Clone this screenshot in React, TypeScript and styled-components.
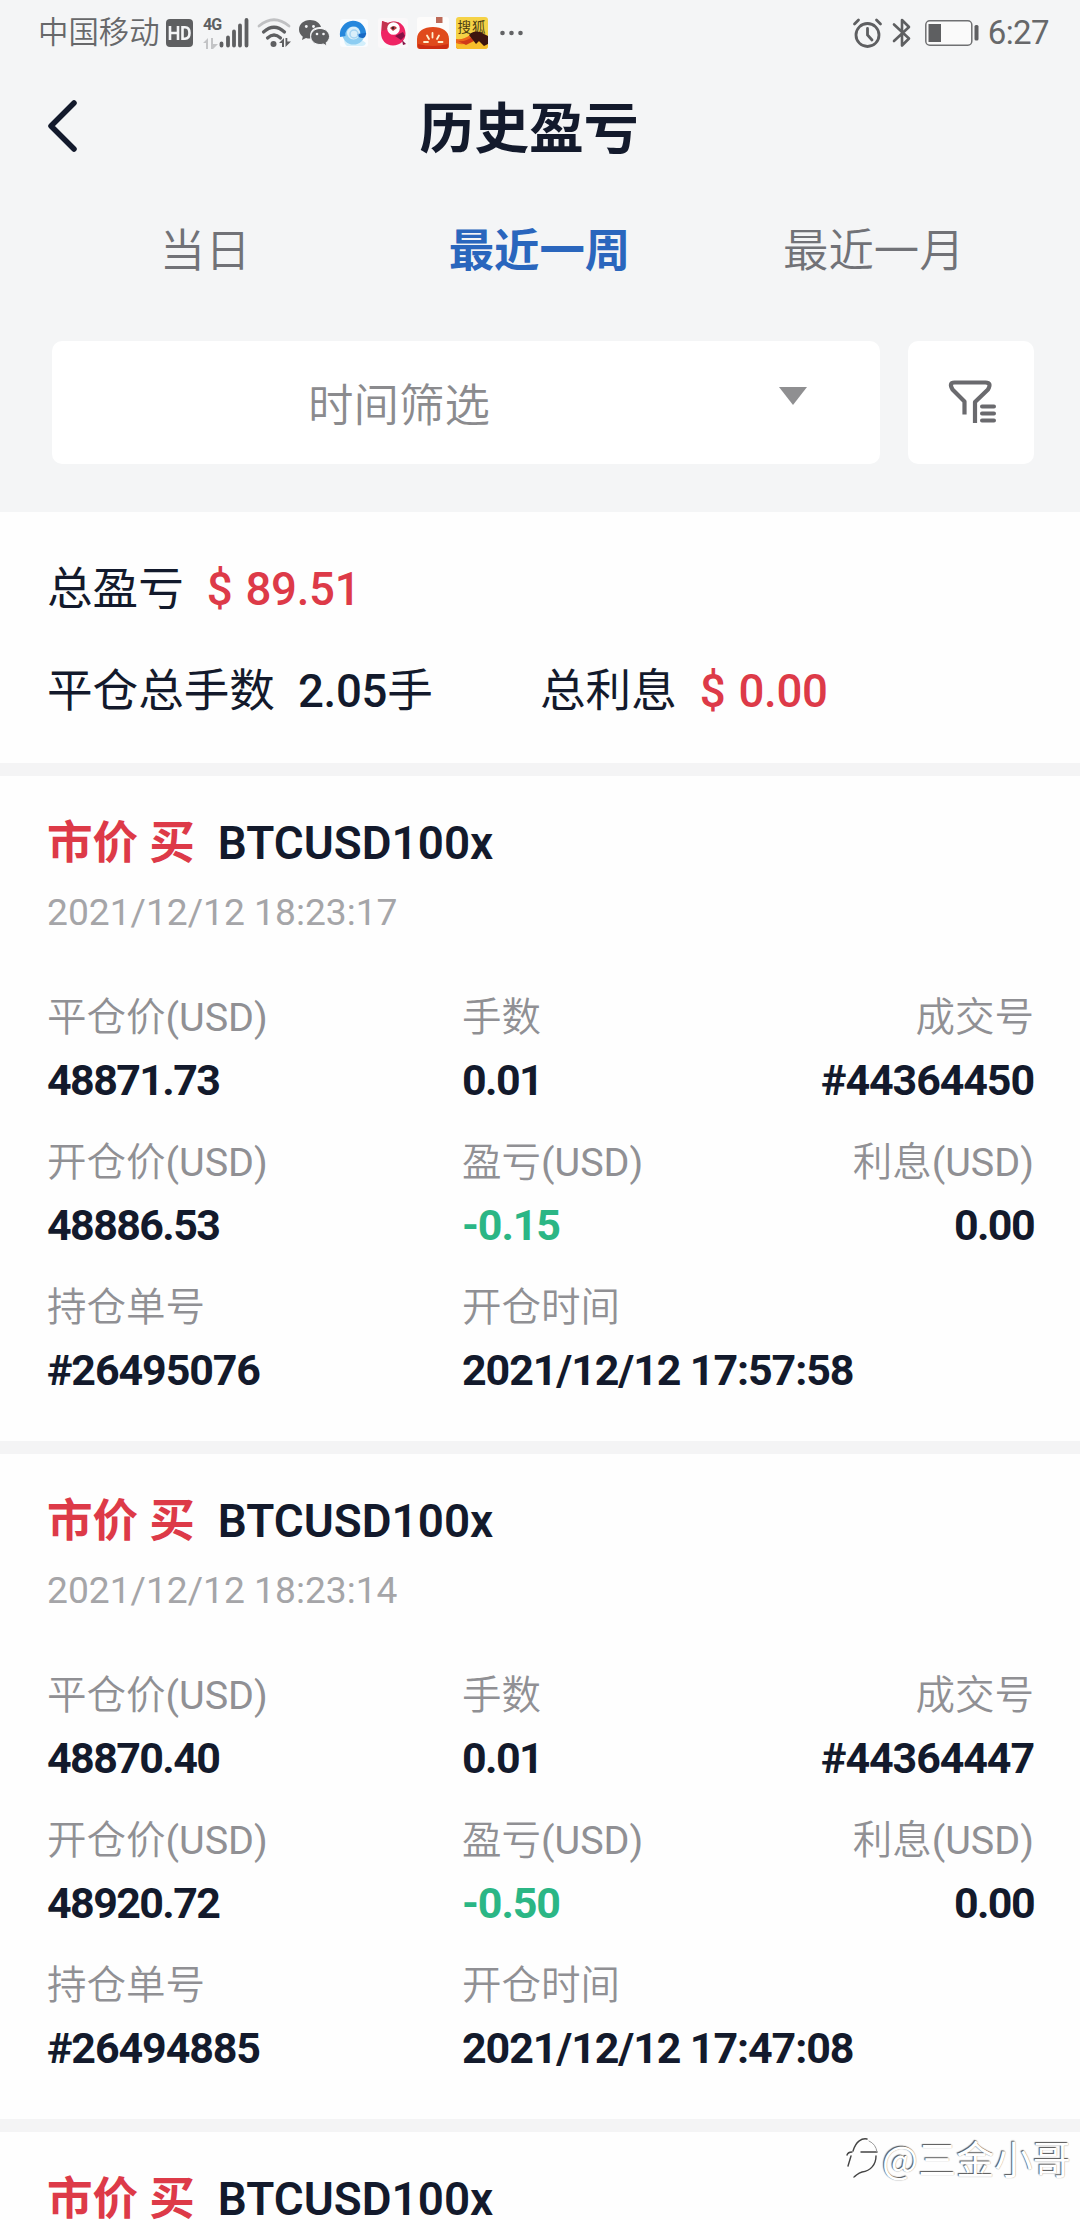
import React from "react";
import styled, { createGlobalStyle } from "styled-components";

const INK = "#131a2c";
const RED = "#dd3a48";
const GREEN = "#2bb685";

const GlobalStyle = createGlobalStyle`
  * { box-sizing: border-box; }
  html, body { margin: 0; padding: 0; background: #fff; }
  body {
    font-family: Roboto, "Noto Sans CJK SC", sans-serif;
    color: ${INK};
  }
`;

const Screen = styled.div`
  position: relative;
  width: 1080px;
  height: 2220px;
  overflow: hidden;
  background: #fefefe;
`;

const Header = styled.header`
  height: 512px;
  background: #f4f5f6;
  display: flex;
  flex-direction: column;
`;

const StatusBar = styled.div`
  height: 66px;
  padding: 0 31px 0 38px;
  display: flex;
  justify-content: space-between;
  color: #67686a;
`;

const Carrier = styled.span`
  font-size: 30.4px;
  line-height: 64px;
  width: 128px;
  font-weight: 350;
  white-space: nowrap;
`;

const StatusGroup = styled.div`
  display: flex;
  align-items: center;
`;

const Clock = styled.span`
  font-size: 33px;
  line-height: 66px;
  letter-spacing: -0.6px;
  margin-left: 9px;
`;

const TitleBar = styled.div`
  height: 122px;
  padding: 0 48px;
  display: grid;
  grid-template-columns: 100px 1fr 122px;
  align-items: center;
`;

const Title = styled.h1`
  margin: 4px 0 0;
  text-align: center;
  font-size: 54.8px;
  line-height: 118px;
  font-weight: 700;
`;

const Tabs = styled.nav`
  height: 128px;
  padding: 0 39px 0 38px;
  display: grid;
  grid-template-columns: repeat(3, 1fr);
`;

const Tab = styled.button<{ $active?: boolean }>`
  border: 0;
  padding: 0;
  background: none;
  font-family: inherit;
  font-size: 45.4px;
  line-height: 124px;
  font-weight: ${(p) => (p.$active ? 700 : 350)};
  color: ${(p) => (p.$active ? "#2a66bd" : "#717277")};
`;

const FilterRow = styled.div`
  display: flex;
  gap: 28px;
  padding: 25px 46px 0 52px;
`;

const Select = styled.div`
  width: 828px;
  height: 123px;
  border-radius: 10px;
  background: #fff;
  display: flex;
  align-items: center;
  padding: 0 73px 2px 256px;
  justify-content: space-between;
  font-size: 45.5px;
  font-weight: 350;
  color: #8b8b8e;
`;

const Caret = styled.i`
  border: 14px solid transparent;
  border-top: 18px solid #8f8f91;
  border-bottom: 0;
  margin-top: -12px;
`;

const FilterButton = styled.div`
  flex: 1;
  height: 123px;
  border-radius: 10px;
  background: #fff;
  display: flex;
  align-items: center;
  justify-content: center;
`;

const Summary = styled.section`
  height: 251px;
  padding: 22px 47px 0;
`;

const SummaryRow = styled.div`
  height: 102px;
  display: flex;
  align-items: center;
  font-size: 45.6px;
`;

const Stat = styled.div<{ $width?: number }>`
  width: ${(p) => (p.$width ? `${p.$width}px` : "auto")};
  display: flex;
  align-items: baseline;
  gap: 23px;
  white-space: nowrap;
`;

const StatValue = styled.span<{ $red?: boolean }>`
  font-weight: 500;
  letter-spacing: -0.3px;
  word-spacing: 2px;
  color: ${(p) => (p.$red ? RED : INK)};
`;

const Hand = styled.span`
  font-weight: 400;
`;

const Card = styled.article`
  height: 678px;
  border-top: 13px solid #f4f4f5;
  padding: 32px 46px 0 47px;
`;

const CardTitle = styled.div`
  height: 72px;
  display: flex;
  gap: 23px;
  align-items: baseline;
  font-size: 45.5px;
  line-height: 72px;
  white-space: nowrap;
`;

const Side = styled.span`
  font-weight: 700;
  color: ${RED};
`;

const Symbol = styled.span`
  font-size: 45.8px;
  font-weight: 600;
`;

const Stamp = styled.div`
  height: 66px;
  font-size: 37.2px;
  line-height: 64px;
  color: #a5a5a8;
`;

const Fields = styled.div`
  margin-top: 41px;
  display: grid;
  grid-template-columns: 415px 1fr auto;
  grid-auto-rows: 145px;
`;

const Field = styled.div<{ $end?: boolean }>`
  text-align: ${(p) => (p.$end ? "right" : "left")};
  white-space: nowrap;
  &:nth-child(8) { grid-column: span 2; }
`;

const Label = styled.div`
  height: 62px;
  font-size: 39.5px;
  line-height: 62px;
  font-weight: 350;
  color: #909094;
`;

const Unit = styled.span`
  font-weight: 400;
`;

const Value = styled.div<{ $green?: boolean; $tight?: boolean }>`
  height: 62px;
  font-size: 43px;
  line-height: 62px;
  font-weight: 700;
  letter-spacing: ${(p) => (p.$tight ? "-1.6px" : "-1.1px")};
  color: ${(p) => (p.$green ? GREEN : INK)};
`;

const Watermark = styled.div`
  position: absolute;
  left: 847px;
  top: 2134px;
  display: flex;
  align-items: center;
  gap: 1px;
  font-family: "Noto Sans CJK SC", sans-serif;
  font-size: 38.2px;
  line-height: 48px;
  color: #fff;
  white-space: nowrap;
  text-shadow: -1px -1px 1px #555, 0 0 1px #888;
`;

const Svg = styled.svg<{ $left?: number }>`
  display: block;
  flex: none;
  margin-left: ${(p) => p.$left ?? 0}px;
  overflow: visible;
`;

const Hd = () => (
  <Svg width="27" height="28" viewBox="0 0 27 28">
    <rect width="27" height="28" rx="4" fill="#5e5f61" />
    <path d="M4 7v14M12 7v14M4 14h8M16.500 8.300h2.500q4.500 0 4.500 5.700t-4.500 5.700h-2.500z" fill="none" stroke="#f4f5f7" strokeWidth="2.600" />
  </Svg>
);

const Network = styled.div`
  width: 46px;
  height: 30px;
  margin-left: 10px;
  display: grid;
  grid-template-columns: 16px 30px;
`;

const NetType = styled.div`
  font: 700 16px/14px Roboto, sans-serif;
  letter-spacing: -1px;
  color: #5e5f61;
  display: flex;
  flex-direction: column;
  gap: 6px;
`;

const Signal = () => (
  <Network>
    <NetType>
      4G
      <Svg width="15" height="11" viewBox="0 0 15 11">
        <path d="M0 5L5 0v11H3V5zM8 0h2v6h5l-5 5H8z" fill="#c3c4c6" />
      </Svg>
    </NetType>
    <Svg width="30" height="30" viewBox="0 0 30 30">
      <path d="M2.500 25.500v2M9 19.500v8M15 13.500v14M21 7.500v20M27.500 2v25.500" stroke="#5e5f61" strokeWidth="3.800" strokeLinecap="round" />
    </Svg>
  </Network>
);

const Wifi = () => (
  <Svg $left={8} width="36" height="30" viewBox="0 0 36 30">
    <g fill="none" strokeLinecap="round">
      <path d="M2 8Q17 -4.500 32 8" stroke="#c0c1c3" strokeWidth="2.800" />
      <path d="M6.500 14Q17 4.500 27.500 14" stroke="#5e5f61" strokeWidth="3.200" />
      <path d="M10.500 20Q17 14 23.500 20" stroke="#5e5f61" strokeWidth="3.200" />
    </g>
    <circle cx="16.500" cy="26" r="3" fill="#5e5f61" />
    <path d="M22 25l5-5v9h-2v-4zM28.500 20h1.800v3.500H34l-5.500 5.500z" fill="#5e5f61" />
  </Svg>
);

const WeChat = () => (
  <Svg $left={6} width="31" height="28" viewBox="0 0 31 28">
    <path d="M11 1C4.500 1 0 5.300 0 10.500c0 3 1.500 5.500 3.800 7.200L3 21l4-2c1.300.4 3 .6 4.500.5C9.500 12 15 7.500 22 8 21 3.800 16.500 1 11 1z" fill="#5e5f61" />
    <path d="M21 9.500c-5.300 0-9.300 3.600-9.300 8s4 8 9.300 8c1.200 0 2.300-.2 3.300-.5l3.700 2-.9-3.300c2-1.500 3.400-3.700 3.400-6.200 0-4.400-4.200-8-9.500-8z" fill="#5e5f61" stroke="#f4f5f7" strokeWidth="1" />
    <g fill="#f4f5f7"><circle cx="7.300" cy="7.500" r="1.400" /><circle cx="14.500" cy="7.500" r="1.400" /><circle cx="18" cy="15" r="1.300" /><circle cx="24.500" cy="15" r="1.300" /></g>
  </Svg>
);

const Browser = () => (
  <Svg $left={10} width="28" height="28" viewBox="0 0 28 28">
    <rect width="28" height="28" rx="3" fill="#fafcfe" />
    <path d="M4 20q9 4 18 1l4 3q-1 3-4 3H7q-3-2-3-7z" fill="#d3effb" />
    <circle cx="13.500" cy="14" r="9" fill="#d9effa" stroke="#8ccdf2" strokeWidth="5" />
    <path d="M2.800 17.500A11 11 0 0 1 13 4.500c6 0 10 4 10.500 11" fill="none" stroke="#2587dc" strokeWidth="5.500" />
    <path d="M17 15l9-1c0 3-1 4.500-3 5-2 .3-4.500-.5-6-4z" fill="#1769c4" />
    <circle cx="14" cy="15" r="4" fill="none" stroke="#a5d4f2" strokeWidth="1.500" />
  </Svg>
);

const Bird = () => (
  <Svg $left={12} width="28" height="28" viewBox="0 0 28 28">
    <rect x="-2" y="-1" width="30" height="30" rx="3" fill="#faf8f9" />
    <path d="M2 2l6 2c9-4 17 1 17.500 10C26 21 20 26.500 13 26.500S1 21 1 14z" fill="#ef2464" />
    <path d="M2 2l6 2c4-2 9-1.500 12 .5L8 10 2 12z" fill="#c3344f" />
    <circle cx="13.500" cy="9.500" r="6.300" fill="#fff" />
    <path d="M10 9q4-4 7 0l-4 3z" fill="#b63b40" />
    <circle cx="13" cy="9" r="1.200" fill="#40252c" />
    <path d="M15 17l8-4 2 4-4 4zM22 21l4 4-3 1z" fill="#851245" />
  </Svg>
);

const Tomato = () => (
  <Svg $left={9} width="32" height="32" viewBox="0 0 32 32">
    <rect width="32" height="32" rx="3" fill="#fdfcfb" />
    <rect x="19" y="0" width="6.500" height="6" fill="#bd6a58" />
    <path d="M0 22C0 14 7 10 16 10s16 4 16 12v7q0 3-3 3H3q-3 0-3-3z" fill="#e04a1c" />
    <path d="M1 27q15 4 30 0v2q0 3-3 3H4q-3 0-3-3z" fill="#cc2d12" />
    <path d="M15.500 16v4.500M10 18.500l2 3.500M22 18.500l-2 3.500M7 25h4M21.500 25h4" stroke="#fff2cf" strokeWidth="1.800" strokeLinecap="round" />
  </Svg>
);

const SohuBox = styled.div`
  margin-left: 7px;
  width: 32px;
  height: 32px;
  border-radius: 3px;
  overflow: hidden;
  background: #f5d246;
  font: 400 13.500px/18px "Noto Sans CJK SC", sans-serif;
  color: #4a3b12;
  text-align: center;
  letter-spacing: 1px;
  white-space: nowrap;
`;

const Sohu = () => (
  <SohuBox>
    搜狐
    <Svg width="32" height="14" viewBox="0 0 32 14">
      <path d="M0 4q8 1 14-4h10v14H0z" fill="#ec651b" />
      <path d="M0 8q9 4 17-4l15 6v4H0z" fill="#f7be2b" />
      <path d="M2 6q8 1 14-4l2 4-8 4z" fill="#cf3a18" />
      <path d="M13 0q4-5 11-3l8 4v8l-4 2-5-5-3 3z" fill="#3d150f" />
    </Svg>
  </SohuBox>
);

const More = () => (
  <Svg $left={12} width="24" height="6" viewBox="0 0 24 6">
    <g fill="#626365"><circle cx="2.500" cy="3" r="2.300" /><circle cx="11.500" cy="3" r="2.300" /><circle cx="20.500" cy="3" r="2.300" /></g>
  </Svg>
);

const Alarm = () => (
  <Svg width="29" height="30" viewBox="0 0 29 30">
    <g fill="none" stroke="#5e5f61" strokeWidth="2.800" strokeLinecap="round">
      <circle cx="14.500" cy="17" r="11.500" />
      <path d="M14.500 10.500V17l4.500 5M1.500 6l4-4M27.500 6l-4-4" />
    </g>
  </Svg>
);

const Bluetooth = () => (
  <Svg $left={10} width="20" height="30" viewBox="0 0 20 30">
    <path d="M2 6.500l15 14-7 7V2l7 7-15 14" fill="none" stroke="#5e5f61" strokeWidth="2.600" strokeLinejoin="round" strokeLinecap="round" />
  </Svg>
);

const Battery = () => (
  <Svg $left={13} width="54" height="26" viewBox="0 0 54 26">
    <rect x="0.800" y="0.800" width="46" height="24.400" rx="4" fill="#fafafa" stroke="#6f7072" strokeWidth="1.500" />
    <rect x="3.500" y="4" width="12.500" height="18" fill="#5e5f61" />
    <rect x="49.500" y="5" width="4" height="15.500" rx="1.500" fill="#5e5f61" />
  </Svg>
);

const Back = () => (
  <Svg width="29" height="54" viewBox="0 0 29 54">
    <path d="M26 3L3 26l23 23" fill="none" stroke={INK} strokeWidth="5.500" strokeLinecap="round" strokeLinejoin="round" />
  </Svg>
);

const Funnel = () => (
  <Svg $left={3} width="48" height="46" viewBox="0 0 48 46">
    <path d="M15.500 34.500V21.500L3.500 9.500Q-.5 2.500 5.500 2.500H36.500Q43 2.500 39 9.500L26 22V43" fill="none" stroke="#6a6a6e" strokeWidth="4.200" strokeLinecap="butt" strokeLinejoin="round" />
    <path d="M33 26.500H45M33 33.500H45M33 40.500H45" stroke="#6a6a6e" strokeWidth="4" strokeLinecap="round" />
  </Svg>
);

const Swirl = () => (
  <Svg width="34" height="44" viewBox="0 0 34 44">
    <g fill="none" stroke="#444" strokeWidth="1.400" strokeLinecap="round">
      <path d="M6 15C9 5 15 2 20 3" />
      <path d="M0 19q1-3 5-3M4 20l-3 10M14 16h16" />
      <path d="M22 5q7 3 8 11" stroke="#999" strokeWidth="1" />
      <path d="M29 20c0 8-5 15-14 16-4 1-5 3-8 5" />
    </g>
  </Svg>
);

type Trade = {
  time: string;
  close: string;
  open: string;
  deal: string;
  profit: string;
  position: string;
  opened: string;
};

const trades: Trade[] = [
  { time: "2021/12/12 18:23:17", close: "48871.73", open: "48886.53", deal: "#44364450", profit: "-0.15", position: "#26495076", opened: "2021/12/12 17:57:58" },
  { time: "2021/12/12 18:23:14", close: "48870.40", open: "48920.72", deal: "#44364447", profit: "-0.50", position: "#26494885", opened: "2021/12/12 17:47:08" },
];

const CardHead = () => (
  <CardTitle>
    <Side>市价 买</Side>
    <Symbol>BTCUSD100x</Symbol>
  </CardTitle>
);

type ItemProps = { label: string; usd?: boolean; value: string; end?: boolean; green?: boolean };

const Item = ({ label, usd, value, end, green }: ItemProps) => (
  <Field $end={end}>
    <Label>
      {label}
      {usd && <Unit>(USD)</Unit>}
    </Label>
    <Value $green={green} $tight={/^\d+\.\d+$/.test(value)}>{value}</Value>
  </Field>
);

const TradeCard = ({ t }: { t: Trade }) => (
  <Card>
    <CardHead />
    <Stamp>{t.time}</Stamp>
    <Fields>
      <Item label="平仓价" usd value={t.close} />
      <Item label="手数" value="0.01" />
      <Item label="成交号" value={t.deal} end />
      <Item label="开仓价" usd value={t.open} />
      <Item label="盈亏" usd value={t.profit} green />
      <Item label="利息" usd value="0.00" end />
      <Item label="持仓单号" value={t.position} />
      <Item label="开仓时间" value={t.opened} />
    </Fields>
  </Card>
);

export default function App() {
  return (
    <Screen>
      <GlobalStyle />
      <Header>
        <StatusBar>
          <StatusGroup>
            <Carrier>中国移动</Carrier>
            <Hd />
            <Signal />
            <Wifi />
            <WeChat />
            <Browser />
            <Bird />
            <Tomato />
            <Sohu />
            <More />
          </StatusGroup>
          <StatusGroup>
            <Alarm />
            <Bluetooth />
            <Battery />
            <Clock>6:27</Clock>
          </StatusGroup>
        </StatusBar>
        <TitleBar>
          <Back />
          <Title>历史盈亏</Title>
        </TitleBar>
        <Tabs>
          <Tab>当日</Tab>
          <Tab $active>最近一周</Tab>
          <Tab>最近一月</Tab>
        </Tabs>
        <FilterRow>
          <Select>
            时间筛选
            <Caret />
          </Select>
          <FilterButton>
            <Funnel />
          </FilterButton>
        </FilterRow>
      </Header>
      <Summary>
        <SummaryRow>
          <Stat>
            总盈亏<StatValue $red>$ 89.51</StatValue>
          </Stat>
        </SummaryRow>
        <SummaryRow>
          <Stat $width={493}>
            平仓总手数
            <StatValue>
              2.05<Hand>手</Hand>
            </StatValue>
          </Stat>
          <Stat>
            总利息<StatValue $red>$ 0.00</StatValue>
          </Stat>
        </SummaryRow>
      </Summary>
      {trades.map((t) => (
        <TradeCard key={t.time} t={t} />
      ))}
      <Card>
        <CardHead />
      </Card>
      <Watermark>
        <Swirl />
        @三金小哥
      </Watermark>
    </Screen>
  );
}
